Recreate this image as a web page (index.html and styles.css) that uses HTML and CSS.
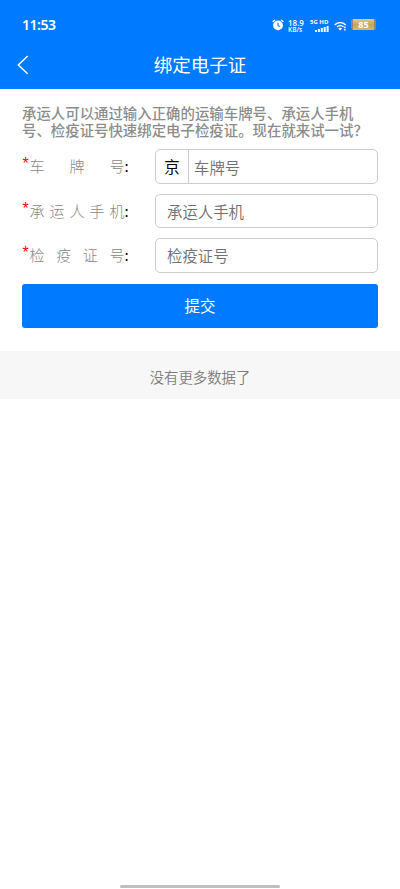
FILE: index.html
```html
<!DOCTYPE html>
<html lang="zh-CN">
<head>
<meta charset="utf-8">
<meta name="viewport" content="width=device-width, initial-scale=1">
<title>绑定电子证</title>
<link rel="stylesheet" href="styles.css">
</head>
<body>
<header class="header">
  <div class="status">
    <span class="time">11:53</span>
    <svg class="alarm" viewBox="0 0 12 12"><circle cx="6" cy="6.4" r="4.9" fill="#fff"/><path d="M1.1 2.6 2.6 1.2M10.9 2.6 9.4 1.2" stroke="#fff" stroke-width="1.4" stroke-linecap="round"/><path d="M6 3.8v2.9l2 .8" fill="none" stroke="#007aff" stroke-width="1.1"/></svg>
    <span class="speed"><b>18.9</b><b>KB/s</b></span>
    <span class="mobile">
      <b>5G HD</b>
      <svg class="bars" viewBox="0 0 14 6" fill="#fff"><rect x="0" y="4" width="2" height="2"/><rect x="2.9" y="3" width="2" height="3"/><rect x="5.8" y="2" width="2" height="4"/><rect x="8.7" y="1" width="2" height="5"/><rect x="11.6" y="0" width="2" height="6"/></svg>
    </span>
    <svg class="wifi" viewBox="0 0 13 10" fill="none" stroke="#fff" stroke-width="1.5"><path d="M.7 3.9Q6.2-1 11.7 3.9M2.9 6Q6.2 3 9.5 6"/><path d="M6.2 9.6 4.3 7.6Q6.2 6.1 8.1 7.6Z" fill="#fff" stroke="none"/><path d="M10.8 5.6v1.6M10.8 8.1v1.5" stroke-width="1.5"/></svg>
    <span class="battery">85</span>
  </div>
  <nav class="nav">
    <svg class="back" viewBox="0 0 12 20"><path d="M10.7 1 1.3 9.9l9.4 8.9" fill="none" stroke="#fff" stroke-width="1.4"/></svg>
    <h1 class="title">绑定电子证</h1>
  </nav>
</header>
<main>
  <form class="form">
    <p class="intro">承运人可以通过输入正确的运输车牌号、承运人手机号、检疫证号快速绑定电子检疫证。现在就来试一试？</p>
    <div class="row">
      <label class="label"><i>*</i><span class="name"><span>车</span><span>牌</span><span>号</span></span>:</label>
      <div class="field"><span class="prefix">京</span><input class="input plate" placeholder="车牌号"></div>
    </div>
    <div class="row">
      <label class="label"><i>*</i><span class="name"><span>承</span><span>运</span><span>人</span><span>手</span><span>机</span></span>:</label>
      <div class="field"><input class="input" placeholder="承运人手机"></div>
    </div>
    <div class="row">
      <label class="label"><i>*</i><span class="name"><span>检</span><span>疫</span><span>证</span><span>号</span></span>:</label>
      <div class="field"><input class="input" placeholder="检疫证号"></div>
    </div>
    <button class="submit" type="button">提交</button>
  </form>
  <div class="empty">没有更多数据了</div>
</main>
<div class="home"></div>
</body>
</html>
```
FILE: styles.css
```css
* { box-sizing: border-box; }
body {
  margin: 0;
  height: 889px;
  display: flex;
  flex-direction: column;
  background: #fff;
  font-family: "Noto Sans CJK SC", sans-serif;
  overflow: hidden;
}
main { flex: 1; }
.header { height: 89px; background: #007aff; color: #fff; }
.status { height: 49px; padding: 1px 24px 0 22px; display: flex; align-items: center; }
.time { flex: 1; font: 600 14px/20px "Noto Sans", sans-serif; letter-spacing: -0.45px; }
.alarm { width: 12px; height: 12px; margin-right: 4px; }
.speed { width: 17px; margin: 1px 5px 0 0; display: flex; flex-direction: column; font: 6.5px/7px "Open Sans", sans-serif; white-space: nowrap; }
.speed b { height: 7px; font-weight: 600; }
.speed b:first-child { font-size: 8px; }
.mobile { width: 19px; margin-right: 5px; display: flex; flex-direction: column; font: 6px/7px "Open Sans", sans-serif; white-space: nowrap; }
.bars { width: 14px; height: 6px; margin: 0 0 0 5px; }
.wifi { width: 13px; height: 10px; margin: 2px 4px 0 0; }
.battery {
  width: 25px;
  height: 11px;
  margin-bottom: 1px;
  border: solid #8c8875;
  border-width: 0 2px;
  border-radius: 2px;
  background: linear-gradient(#e3c88e, #c6a45e 50%, #d6b675);
  font: 700 9px/11px "Open Sans", sans-serif;
  text-align: center;
}
.nav { height: 32px; display: flex; align-items: center; padding: 0 17px; }
.back { width: 12px; height: 20px; }
.title { flex: 1; margin: 0 12px 2px 0; text-align: center; font-size: 18.5px; line-height: 28px; font-weight: 400; }
.form { padding: 15px 22px 23px; }
.intro { margin: 0 -2px 10.8px 0; font-size: 14.4px; line-height: 17.3px; font-weight: 500; letter-spacing: 0.02px; color: #8c8c8c; }
.row { display: flex; height: 34.4px; margin-bottom: 10px; }
.label { width: 133px; display: flex; font-size: 15px; line-height: 33px; color: #000; }
.label i { width: 7.5px; padding-left: 0.5px; color: #f00; font: 16px/30px "Liberation Sans", sans-serif; }
.name { width: 95px; display: flex; justify-content: space-between; color: #888; font-weight: 300; }
.field { flex: 1; display: flex; border: 1px solid #ccc; border-radius: 5px; overflow: hidden; }
.prefix { width: 33px; border-right: 1px solid #ccc; text-align: center; font-size: 15.4px; line-height: 33px; }
.input { flex: 1; min-width: 0; border: 0; outline: 0; padding: 0 11px; background: none; font: 350 15.4px "Noto Sans CJK SC", sans-serif; color: #333; }
.plate { padding-left: 5px; }
.input::placeholder { color: #707070; }
.submit { display: block; width: 100%; height: 44px; margin-top: 11.4px; padding: 0 0 1px; border: 0; border-radius: 3px; background: #007aff; color: #fff; font: 15.5px "Noto Sans CJK SC", sans-serif; }
.empty { height: 48px; background: #f7f7f7; text-align: center; font-size: 14.4px; font-weight: 350; line-height: 51px; color: #7c7c7c; }
.home { width: 160px; height: 3px; margin: 0 auto 1px; border-radius: 2px; background: #bfbfbf; }
```
